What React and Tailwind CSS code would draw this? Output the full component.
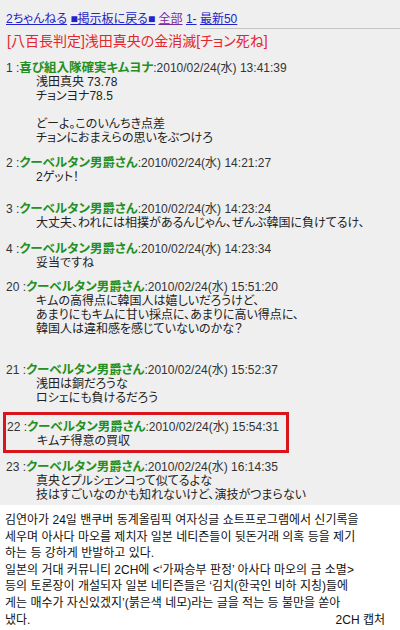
const jp = {
  fontFamily: '"Liberation Sans", "Noto Sans CJK JP", sans-serif',
};

const baron = "クーベルタン男爵さん";

const posts = [
  {
    no: "1",
    name: "喜び組入隊確実キムヨナ",
    date: "2010/02/24(水) 13:41:39",
    lines: ["浅田真央 73.78", "チョンヨナ78.5", "", "どーよ。このいんちき点差", "チョンにおまえらの思いをぶつけろ"],
    gap: "mb-[11px]",
  },
  { no: "2", name: baron, date: "2010/02/24(水) 14:21:27", lines: ["2ゲット！"], gap: "mb-[18px]" },
  {
    no: "3",
    name: baron,
    date: "2010/02/24(水) 14:23:24",
    lines: ["大丈夫、われには相撲があるんじゃん、ぜんぶ韓国に負けてるけ、"],
    gap: "mb-[12px]",
  },
  { no: "4", name: baron, date: "2010/02/24(水) 14:23:34", lines: ["妥当ですね"], gap: "mb-[10px]" },
  {
    no: "20",
    name: baron,
    date: "2010/02/24(水) 15:51:20",
    lines: [
      "キムの高得点に韓国人は嬉しいだろうけど、",
      "あまりにもキムに甘い採点に、あまりに高い得点に、",
      "韓国人は違和感を感じていないのかな？",
    ],
    gap: "mb-[27px]",
  },
  {
    no: "21",
    name: baron,
    date: "2010/02/24(水) 15:52:37",
    lines: ["浅田は銅だろうな", "ロシェにも負けるだろう"],
    gap: "mb-[7px]",
  },
];

const last = {
  no: "23",
  name: baron,
  date: "2010/02/24(水) 16:14:35",
  lines: ["真央とプルシェンコって似てるよな", "技はすごいなのかも知れないけど、演技がつまらない"],
};

function Post({ post }) {
  return (
    <div>
      <div className="h-[14px] leading-[14px] whitespace-nowrap text-[#333]">
        <span>{post.no} :</span>
        <span className="font-bold text-[12.5px] text-[#239023]">{post.name}</span>
        <span>:{post.date}</span>
      </div>
      <div className="pl-[30px] text-[#222]">
        {post.lines.map((l, i) => (
          <div key={i} className="h-[14px] leading-[14px] whitespace-nowrap">
            {l}
          </div>
        ))}
      </div>
    </div>
  );
}

const korean = [
  "김연아가 24일 밴쿠버 동계올림픽 여자싱글 쇼트프로그램에서 신기록을",
  "세우며 아사다 마오를 제치자 일본 네티즌들이 뒷돈거래 의혹 등을 제기",
  "하는 등 강하게 반발하고 있다.",
  "일본의 거대 커뮤니티 2CH에 <‘가짜승부 판정’ 아사다 마오의 금 소멸>",
  "등의 토론장이 개설되자 일본 네티즌들은 ‘김치(한국인 비하 지칭)들에",
  "게는 매수가 자신있겠지’(붉은색 네모)라는 글을 적는 등 불만을 쏟아",
];

export default function App() {
  return (
    <div className="w-[400px] h-[630px] bg-white overflow-hidden">
      {/* 2ch screenshot */}
      <div className="bg-[#efefef] h-[505px] text-[12px] [font-feature-settings:'palt']" style={jp}>
        <div className="pl-[6px] pt-[12px] h-[28px] leading-[14px] whitespace-nowrap">
          <span className="text-[#2323c8] underline">2ちゃんねる</span>{" "}
          <span className="text-[#2323c8] underline">■掲示板に戻る■</span>{" "}
          <span className="text-[#7b2a9c] underline">全部</span>{" "}
          <span className="text-[#2323c8] underline">1-</span>{" "}
          <span className="text-[#2323c8] underline">最新50</span>
        </div>
        <div className="ml-[200px] h-px bg-[#c4c4c4]"></div>
        <div className="pl-[7px] pt-[4px] h-[32px] text-[14px] leading-[16px] text-[#e3262c] whitespace-nowrap">
          [八百長判定]浅田真央の金消滅[チョン死ね]
        </div>

        <div className="pl-[6px]">
          {posts.map((p) => (
            <div key={p.no} className={p.gap}>
              <Post post={p} />
            </div>
          ))}

          {/* highlighted post */}
          <div className="-ml-[3px] w-[286px] border-[3px] border-[#d9141b] pl-[1px] pt-[5px] pb-[2px] mb-[7px]">
            <Post
              post={{ no: "22", name: baron, date: "2010/02/24(水) 15:54:31", lines: ["キムチ得意の買収"] }}
            />
          </div>

          <Post post={last} />
        </div>
      </div>

      {/* caption */}
      <div
        className="px-[5px] pt-[7px] text-[12px] leading-[16.6px] text-[#111]"
        style={{ fontFamily: '"Liberation Sans", "Noto Sans CJK KR", sans-serif' }}
      >
        {korean.map((l, i) => (
          <div key={i} className="whitespace-nowrap">
            {l}
          </div>
        ))}
        <div className="flex justify-between pr-[10px]">
          <span>냈다.</span>
          <span>2CH 캡처</span>
        </div>
      </div>
    </div>
  );
}
